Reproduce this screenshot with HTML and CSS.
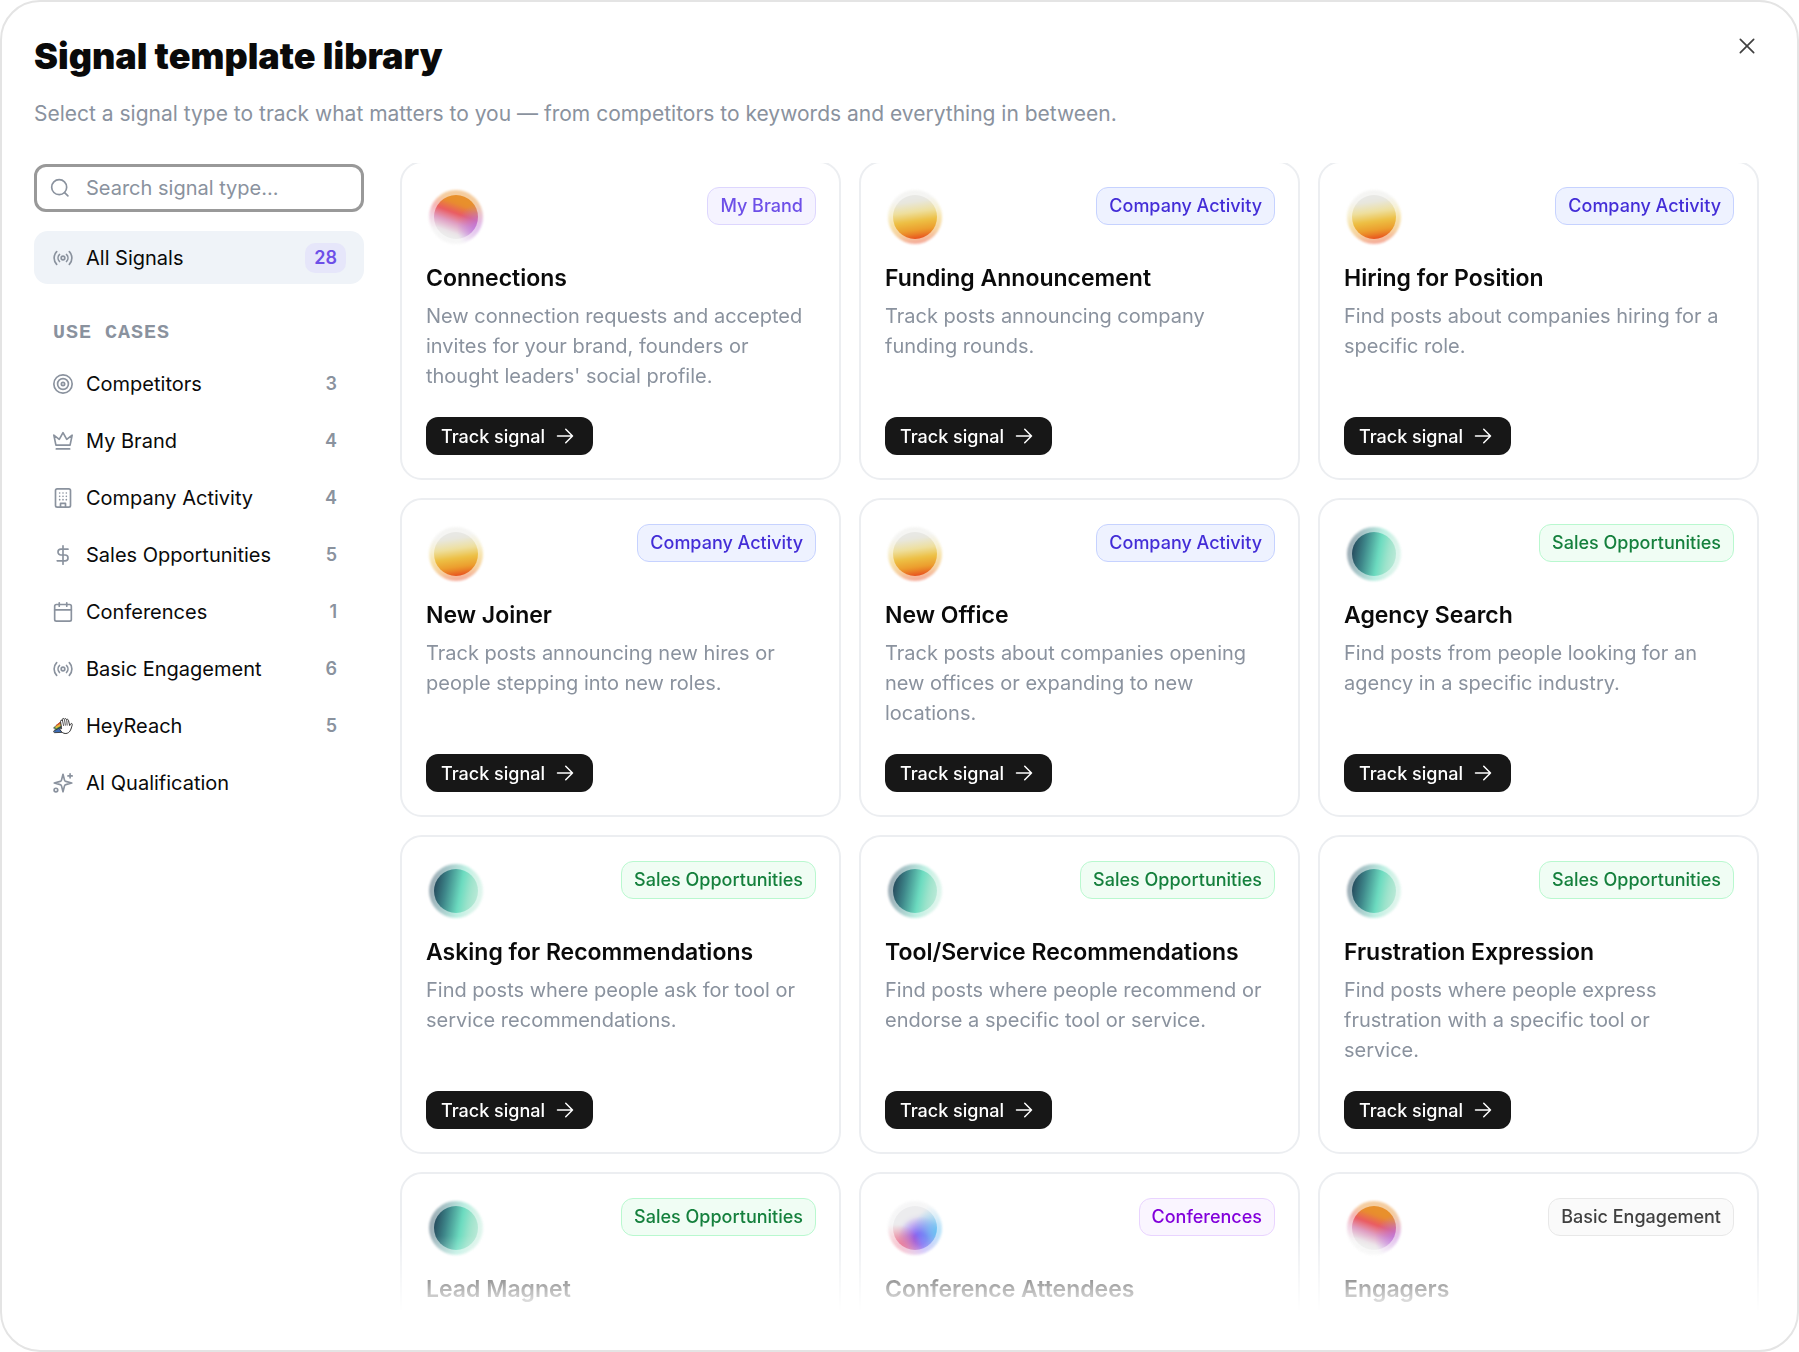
FILE: index.html
```html
<!doctype html>
<html lang="en">
<head>
    <meta charset="utf-8">
    <title>Signal template library</title>
    <link rel="stylesheet" href="styles.css">
</head>
<body>

<!-- icon sprite -->
<svg class="sprite" aria-hidden="true">
    <symbol id="i-search" viewBox="0 0 24 24"><circle cx="11" cy="11" r="9"/><path d="m21.500 21.500-4-4"/></symbol>
    <symbol id="i-close" viewBox="0 0 24 24"><path d="M20 4 4 20M4 4l16 16"/></symbol>
    <symbol id="i-arrow" viewBox="0 0 24 24"><path d="M2 12h20M13 3l9 9-9 9"/></symbol>
    <symbol id="i-radio" viewBox="0 0 24 24"><circle cx="12" cy="12" r="2.200"/><path d="M7.800 16.200a6 6 0 0 1 0-8.400M16.200 7.800a6 6 0 0 1 0 8.400M4.400 19.600a11 11 0 0 1 0-15.200M19.600 4.400a11 11 0 0 1 0 15.200"/></symbol>
    <symbol id="i-target" viewBox="0 0 24 24"><circle cx="12" cy="12" r="11"/><circle cx="12" cy="12" r="6.500"/><circle cx="12" cy="12" r="2"/></symbol>
    <symbol id="i-crown" viewBox="0 0 24 24"><path d="m12 2 4.500 8 6.500-5-2.500 12h-17L1 5l6.500 5ZM4 21.500h16"/></symbol>
    <symbol id="i-building" viewBox="0 0 24 24"><rect x="3" y="1" width="18" height="22" rx="2"/><path d="M9 22.500v-4h6v4M8 6h.01M12 6h.01M16 6h.01M8 10h.01M12 10h.01M16 10h.01M8 14h.01M12 14h.01M16 14h.01"/></symbol>
    <symbol id="i-dollar" viewBox="0 0 24 24"><path d="M12 1v22M18 5H9.500a3.500 3.500 0 0 0 0 7h5a3.500 3.500 0 0 1 0 7H5"/></symbol>
    <symbol id="i-calendar" viewBox="0 0 24 24"><rect x="2" y="3" width="20" height="20" rx="2"/><path d="M7.500 1v4M16.500 1v4M2 9.500h20"/></symbol>
    <symbol id="i-sparkles" viewBox="0 0 24 24"><path d="M12 1.500 13.800 8.600a2 2 0 0 0 1.500 1.500L22.500 12l-7.200 1.900a2 2 0 0 0-1.500 1.500L12 22.500l-1.800-7.100a2 2 0 0 0-1.500-1.500L1.500 12l7.200-1.900a2 2 0 0 0 1.500-1.500ZM20.500 1v5M23 3.500h-5"/><circle cx="3.500" cy="20.500" r="2.200"/></symbol>
    <symbol id="i-hand" viewBox="0 0 24 24">
        <path d="M1 14 8 8l3 5-7 4Z" fill="#3f8f4a" stroke="#444" stroke-width="1"/>
        <path d="M4 10.500 9 7l2 4-7 3Z" fill="#d9532c" stroke="none"/>
        <path d="m2.500 13 7-4 1 2-7 4Z" fill="#e7b93c" stroke="none"/>
        <path d="m1 18 9-5 4 6.500-12 .5Z" fill="#3c6cb4" stroke="#333" stroke-width="1"/>
        <path d="M10 13 9 6.500C8.800 5 10.800 4.600 11.300 6l-.1-1.800c0-1.500 2-1.600 2.400-.3.600-1.200 2.300-.9 2.600.4.900-.8 2.200-.2 2.400 1L20 11.500c.7-1.300 1.500-3 2.500-2.500 1 .4.600 2-.1 4-1 3.500-2.200 7.500-6.900 8-3.500.2-5.500-2-7-4.500-.8-1.500.5-2.500 1.500-1.500Z" fill="#fff" stroke="#333" stroke-width="1.200"/>
        <path d="m11.500 6 1.200 5.500M13.800 4.500l1 6.500M16.500 5l.5 6" fill="none" stroke="#333" stroke-width="1"/>
    </symbol>
</svg>

<main class="panel">
    <header class="head">
        <div>
            <h1 class="title">Signal template library</h1>
            <p class="subtitle">Select a signal type to track what matters to you — from competitors to keywords and everything in between.</p>
        </div>
        <button class="close" type="button" aria-label="Close"><svg class="icon"><use href="#i-close"/></svg></button>
    </header>

    <div class="content">
        <aside class="sidebar">
            <label class="search">
                <svg class="icon"><use href="#i-search"/></svg>
                <input type="text" placeholder="Search signal type..." aria-label="Search signal type">
            </label>

            <a class="nav-item active" href="#"><svg class="icon"><use href="#i-radio"/></svg>All Signals<span class="count">28</span></a>

            <h2 class="nav-label">USE CASES</h2>
            <nav class="nav">
                <a class="nav-item" href="#"><svg class="icon"><use href="#i-target"/></svg>Competitors<span class="count">3</span></a>
                <a class="nav-item" href="#"><svg class="icon"><use href="#i-crown"/></svg>My Brand<span class="count">4</span></a>
                <a class="nav-item" href="#"><svg class="icon"><use href="#i-building"/></svg>Company Activity<span class="count">4</span></a>
                <a class="nav-item" href="#"><svg class="icon"><use href="#i-dollar"/></svg>Sales Opportunities<span class="count">5</span></a>
                <a class="nav-item" href="#"><svg class="icon"><use href="#i-calendar"/></svg>Conferences<span class="count">1</span></a>
                <a class="nav-item" href="#"><svg class="icon"><use href="#i-radio"/></svg>Basic Engagement<span class="count">6</span></a>
                <a class="nav-item" href="#"><svg class="icon"><use href="#i-hand"/></svg>HeyReach<span class="count">5</span></a>
                <a class="nav-item" href="#"><svg class="icon"><use href="#i-sparkles"/></svg>AI Qualification</a>
            </nav>
        </aside>

        <section class="scroller">
            <div class="cards">
                <article class="card">
                    <div class="card-top"><span class="orb sunset"></span><span class="tag brand">My Brand</span></div>
                    <h3>Connections</h3>
                    <p>New connection requests and accepted invites for your brand, founders or thought leaders' social profile.</p>
                    <button class="track" type="button">Track signal<svg class="icon"><use href="#i-arrow"/></svg></button>
                </article>
                <article class="card">
                    <div class="card-top"><span class="orb fire"></span><span class="tag company">Company Activity</span></div>
                    <h3>Funding Announcement</h3>
                    <p>Track posts announcing company funding rounds.</p>
                    <button class="track" type="button">Track signal<svg class="icon"><use href="#i-arrow"/></svg></button>
                </article>
                <article class="card">
                    <div class="card-top"><span class="orb fire"></span><span class="tag company">Company Activity</span></div>
                    <h3>Hiring for Position</h3>
                    <p>Find posts about companies hiring for a specific role.</p>
                    <button class="track" type="button">Track signal<svg class="icon"><use href="#i-arrow"/></svg></button>
                </article>

                <article class="card">
                    <div class="card-top"><span class="orb fire"></span><span class="tag company">Company Activity</span></div>
                    <h3>New Joiner</h3>
                    <p>Track posts announcing new hires or people stepping into new roles.</p>
                    <button class="track" type="button">Track signal<svg class="icon"><use href="#i-arrow"/></svg></button>
                </article>
                <article class="card">
                    <div class="card-top"><span class="orb fire"></span><span class="tag company">Company Activity</span></div>
                    <h3>New Office</h3>
                    <p>Track posts about companies opening new offices or expanding to new locations.</p>
                    <button class="track" type="button">Track signal<svg class="icon"><use href="#i-arrow"/></svg></button>
                </article>
                <article class="card">
                    <div class="card-top"><span class="orb mint"></span><span class="tag sales">Sales Opportunities</span></div>
                    <h3>Agency Search</h3>
                    <p>Find posts from people looking for an agency in a specific industry.</p>
                    <button class="track" type="button">Track signal<svg class="icon"><use href="#i-arrow"/></svg></button>
                </article>

                <article class="card">
                    <div class="card-top"><span class="orb mint"></span><span class="tag sales">Sales Opportunities</span></div>
                    <h3>Asking for Recommendations</h3>
                    <p>Find posts where people ask for tool or service recommendations.</p>
                    <button class="track" type="button">Track signal<svg class="icon"><use href="#i-arrow"/></svg></button>
                </article>
                <article class="card">
                    <div class="card-top"><span class="orb mint"></span><span class="tag sales">Sales Opportunities</span></div>
                    <h3>Tool/Service Recommendations</h3>
                    <p>Find posts where people recommend or endorse a specific tool or service.</p>
                    <button class="track" type="button">Track signal<svg class="icon"><use href="#i-arrow"/></svg></button>
                </article>
                <article class="card">
                    <div class="card-top"><span class="orb mint"></span><span class="tag sales">Sales Opportunities</span></div>
                    <h3>Frustration Expression</h3>
                    <p>Find posts where people express frustration with a specific tool or service.</p>
                    <button class="track" type="button">Track signal<svg class="icon"><use href="#i-arrow"/></svg></button>
                </article>

                <article class="card">
                    <div class="card-top"><span class="orb mint"></span><span class="tag sales">Sales Opportunities</span></div>
                    <h3>Lead Magnet</h3>
                </article>
                <article class="card">
                    <div class="card-top"><span class="orb aurora"></span><span class="tag conference">Conferences</span></div>
                    <h3>Conference Attendees</h3>
                </article>
                <article class="card">
                    <div class="card-top"><span class="orb sunset"></span><span class="tag basic">Basic Engagement</span></div>
                    <h3>Engagers</h3>
                </article>
            </div>
        </section>
    </div>
</main>

</body>
</html>
```
FILE: styles.css
```css
* { box-sizing: border-box; }
body { margin: 0; background: #fff; color: #0a0a0a; font-family: Inter, "Liberation Sans", sans-serif; font-size: 20px; }
h1, h2, h3, p { margin: 0; }
button, input { font-family: inherit; }
a { color: inherit; text-decoration: none; }

.sprite { display: none; }
.icon { width: 20px; height: 20px; flex: none; fill: none; stroke: currentColor; stroke-width: 2; stroke-linecap: round; stroke-linejoin: round; }

.panel { display: flex; flex-direction: column; height: 100vh; padding: 32px 38px 38px 32px; border: 2px solid #e4e4e4; border-radius: 40px; background: #fff; }

/* header */
.head { display: flex; justify-content: space-between; align-items: flex-start; height: 129px; flex: none; }
.title { font-size: 36px; font-weight: 900; line-height: 44px; }
.subtitle { margin-top: 21px; font-size: 21px; line-height: 30px; color: #8a929e; }
.close { display: flex; padding: 2px; border: 0; background: none; color: #404040; }

/* sidebar */
.content { display: flex; gap: 36px; flex: 1; min-height: 0; }
.sidebar { width: 330px; flex: none; }
.search { display: flex; align-items: center; gap: 16px; height: 48px; padding: 0 13px; margin-top: 1px; border: 3px solid #999; border-radius: 12px; color: #8a929e; }
.search input { flex: 1; min-width: 0; padding: 0; border: 0; outline: 0; background: none; font-size: 20px; color: #0a0a0a; }
.search input::placeholder { color: #8a929e; opacity: 1; }
.nav-item { display: flex; align-items: center; height: 53px; padding: 0 27px 0 19px; border-radius: 14px; font-size: 20px; }
.nav-item .icon { margin-right: 13px; color: #8a929e; }
.count { margin-left: auto; font-size: 18px; font-weight: 600; color: #8a929e; }
.active { margin-top: 19px; padding-right: 18px; background: #eff3f8; }
.active .count { padding: 0 9px; border-radius: 10px; background: #e6e6fa; color: #6d4fe8; line-height: 30px; }
.nav-label { margin: 38px 0 13px 19px; font-family: "Liberation Mono", monospace; font-size: 20px; line-height: 22px; letter-spacing: 1px; color: #8a929e; }
.nav { display: flex; flex-direction: column; gap: 4px; }

/* cards */
.scroller { flex: 1; min-width: 0; overflow: hidden; -webkit-mask-image: linear-gradient(to top, transparent, #000 76px); mask-image: linear-gradient(to top, transparent, #000 76px); }
.cards { display: grid; grid-template-columns: repeat(3, 1fr); grid-auto-rows: 1fr; gap: 18px; margin-top: -2px; }
.card { display: flex; flex-direction: column; align-items: flex-start; padding: 24px 23px 23px 24px; border: 2px solid #eceef1; border-radius: 22px; }
.card-top { display: flex; justify-content: space-between; align-items: flex-start; align-self: stretch; height: 76px; }
.card h3 { font-size: 23px; font-weight: 600; line-height: 30px; }
.card p { margin: 8px 0 26px; padding-right: 6px; font-size: 20px; line-height: 30px; color: #8a929e; }
.track { display: flex; align-items: center; gap: 11px; height: 38px; margin-top: auto; padding: 0 19px 0 15px; border: 0; border-radius: 12px; background: #171717; color: #fff; font-size: 18px; font-weight: 500; }
.track .icon { width: 18px; height: 18px; }

.tag { height: 38px; padding: 0 12px; border: 1px solid; border-radius: 12px; font-size: 18px; font-weight: 500; line-height: 36px; }
.brand { background: #f5f3ff; border-color: #ddd6fe; color: #6d4fe8; }
.company { background: #eef2ff; border-color: #c6d2ff; color: #432dd7; }
.sales { background: #f0fdf4; border-color: #b9f8cf; color: #15803d; }
.conference { background: #faf5ff; border-color: #e9d4ff; color: #8200db; }
.basic { background: #fafafa; border-color: #e8e8e8; color: #404040; }

/* glowing planet: soft halo behind a smaller disc */
.orb { display: grid; place-items: center; width: 56px; height: 56px; margin: 2px; }
.orb::before, .orb::after { content: ""; grid-area: 1 / 1; border-radius: 50%; background: var(--sky); }
.orb::before { width: 54px; height: 54px; opacity: .45; filter: blur(1px); }
.orb::after { width: 44px; height: 44px; }
.sunset { --sky: radial-gradient(circle at 105% 72%, #b878ec 0, #b878ec00 42%), linear-gradient(200deg, #e8902c 28%, #ea5c60 44%, #e0a0c4 60%, #ececec 78%); }
.fire { --sky: linear-gradient(172deg, #e8e8e4 20%, #eee0a0 40%, #edc044 58%, #ec9a2c 76%, #e8401c 94%); }
.mint { --sky: linear-gradient(100deg, #24465a 8%, #3d8488 30%, #6cdcc0 58%, #a2e4cd 76%, #c4ecdc 96%); }
.aurora { --sky: radial-gradient(circle at 12% 98%, #f0506c 0, #f0506c00 42%), radial-gradient(circle at 100% 58%, #62c4f4 0, #62c4f400 48%), radial-gradient(circle at 62% 74%, #8a5cf4 14%, #8a5cf400 52%), #ececee; }
```
